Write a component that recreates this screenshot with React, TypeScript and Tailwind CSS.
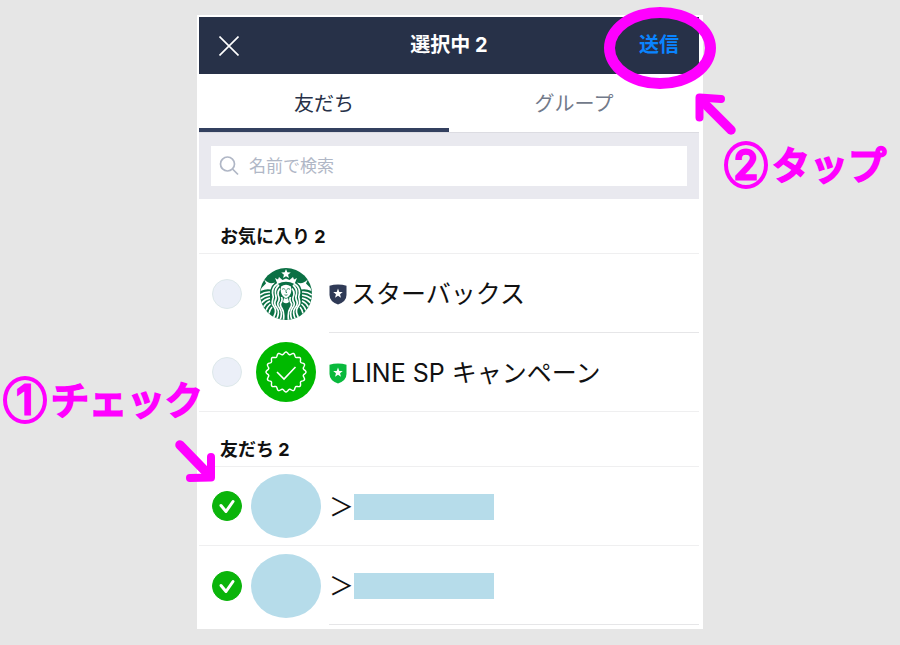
import { useState } from "react";
import clsx from "clsx";

const STAR =
	"M0 -10 L2.6 -3.4 L9.5 -3.1 L4.1 1.3 L5.9 8.1 L0 4.3 L-5.9 8.1 L-4.1 1.3 L-9.5 -3.1 L-2.6 -3.4 Z";

// wavy ring of the verified seal
const SEAL = `${Array.from({ length: 192 }, (_, i) => {
	const a = (i / 192) * Math.PI * 2;
	const r = 18.8 + 1.2 * Math.cos(a * 16);
	return `${i ? "L" : "M"}${(30 + r * Math.sin(a)).toFixed(2)} ${(30 - r * Math.cos(a)).toFixed(2)}`;
}).join("")}Z`;

function SirenHalf() {
	return (
		<g>
			{/* tail fluke */}
			<path
				d="M8 22 L12 31 L3 40 L1 46 Q12 41 21 43 Q22 36 30 29 Q22 32 17 29 Q11 26 8 22Z"
				fill="#fff"
			/>
			<g fill="none" stroke="#fff" strokeWidth="3.2">
				<path d="M0 54 Q9 47 20 48" />
				<path d="M1 62 Q9 55 20 54" />
				<path d="M3 70 Q10 62 20 60" />
				<path d="M7 78 Q12 69 20 66" />
				<path d="M12 85 Q15 77 21 72" />
				<path d="M18 91 Q19 84 24 78" />
			</g>
			{/* hair */}
			<g fill="none" stroke="#fff" strokeWidth="3.4">
				<path d="M36 31 Q24 38 25 50 Q28 58 25 65 Q23 72 29 79 Q34 86 27 99" />
				<path d="M38 34 Q29 42 31 52 Q34 60 30 67 Q28 73 34 80 Q40 88 33 103" />
				<path d="M40 41 Q34 48 37 56 Q40 63 36 69 Q34 74 39 80 Q46 89 40 104" />
				<path d="M43 58 Q46 65 41 71 Q40 76 44 81 Q49 88 47 104" />
			</g>
		</g>
	);
}

function SirenLogo() {
	return (
		<svg viewBox="0 0 104 104" className="size-[52px]" aria-hidden="true">
			<clipPath id="siren">
				<circle cx="52" cy="52" r="52" />
			</clipPath>
			<g clipPath="url(#siren)">
				<rect width="104" height="104" fill="#0b7044" />
				<SirenHalf />
				<g transform="matrix(-1 0 0 1 104 0)">
					<SirenHalf />
				</g>
				<path d={STAR} transform="translate(52 12)" fill="#fff" />
				<path
					d="M30 20 L36 23 L38 18 L45 24 L52 21 L59 24 L66 18 L68 23 L74 20 L69 32 Q52 23 35 32Z"
					fill="#fff"
				/>
				<path
					d="M42 37 Q52 30 62 37 Q64 49 59 55 Q55 60 52 60 Q49 60 45 55 Q40 49 42 37Z"
					fill="#fff"
				/>
				<path d="M48 60 Q52 63 56 60 L58 68 Q52 73 46 68Z" fill="#fff" />
				<g fill="none" stroke="#0b7044" strokeWidth="1.6">
					<path d="M44 42.500 Q47 40 50 42.500 M54 42.500 Q57 40 60 42.500" />
					<path d="M52 43 V49 H54" />
					<path d="M49 53.500 Q52 55.500 55 53.500" />
				</g>
			</g>
		</svg>
	);
}

function SealLogo() {
	return (
		<svg viewBox="0 0 60 60" className="size-[60px]" fill="none" aria-hidden="true">
			<circle cx="30" cy="30" r="30" fill="#00b900" />
			<path d={SEAL} stroke="#fff" strokeWidth="1.4" />
			<path d="M21 30 L28 37 L39.500 25" stroke="#fff" strokeWidth="1.6" />
		</svg>
	);
}

function Shield({ color }: { color: string }) {
	return (
		<svg viewBox="0 0 18 21" className="h-[21px] w-[18px] shrink-0" aria-hidden="true">
			<path
				d="M9 0.500 Q13.500 0.500 17.500 1.800 V11 Q17.500 17.500 9 20.500 Q0.500 17.500 0.500 11 V1.800 Q4.500 0.500 9 0.500Z"
				fill={color}
			/>
			<path d={STAR} transform="translate(9 9.600) scale(0.5)" fill="#fff" />
		</svg>
	);
}

function Blob() {
	return <span className="h-16 w-[70px] rounded-[50%] bg-[#b6dcea]" />;
}

function HiddenName() {
	return (
		<>
			<span>＞</span>
			<span className="h-[26px] w-[140px] bg-[#b6dcea]" />
		</>
	);
}

const favorites = [
	{
		id: "starbucks",
		avatar: <SirenLogo />,
		name: (
			<>
				<Shield color="#2f3a56" />
				<span className="pl-1">スターバックス</span>
			</>
		),
	},
	{
		id: "line-sp",
		avatar: <SealLogo />,
		name: (
			<>
				<Shield color="#09b93c" />
				<span className="pl-1">LINE SP キャンペーン</span>
			</>
		),
	},
];

const friends = [
	{ id: "friend-1", avatar: <Blob />, name: <HiddenName /> },
	{ id: "friend-2", avatar: <Blob />, name: <HiddenName /> },
];

type Row = (typeof favorites)[number];

function ContactRow({ row, line, checked, onToggle }: { row: Row; line: "full" | "inset"; checked: boolean; onToggle: () => void }) {
	return (
		<li className={clsx("h-[79px] border-[#efeff0]", line === "full" && "border-b")}>
			<label htmlFor={row.id} className="flex h-full items-stretch pl-[13px]">
				<span className="relative flex items-center">
					<input
						id={row.id}
						type="checkbox"
						checked={checked}
						onChange={onToggle}
						className="size-[30px] appearance-none rounded-full border border-[#dde8ea] bg-[#ebeff8] checked:border-[#0bb40b] checked:bg-[#0bb40b]"
					/>
					{checked && (
						<svg viewBox="0 0 30 30" className="pointer-events-none absolute size-[30px]" fill="none" aria-hidden="true">
							<path d="M9 14.500 L14 20.500 L21 10.500" stroke="#fff" strokeWidth="3" strokeLinecap="round" strokeLinejoin="round" />
						</svg>
					)}
				</span>
				<span className="flex w-[87px] items-center justify-center">{row.avatar}</span>
				<span
					className={clsx(
						"flex flex-1 items-center border-[#e6e6e8] pt-0.5 text-[25px] leading-8 text-[#111]",
						line === "inset" && "border-b",
					)}
				>
					{row.name}
				</span>
			</label>
		</li>
	);
}

function SectionTitle({ children }: { children: string }) {
	return (
		<h2 className="border-b border-[#efeff0] pt-[26px] pb-1 pl-[21px] text-[18px] leading-6 font-bold text-[#111]">
			{children}
		</h2>
	);
}

function Note({ num, text, className }: { num: string; text: string; className: string }) {
	return (
		<p
			className={clsx(
				"pointer-events-none absolute flex items-center text-[38px] leading-[48px] font-normal whitespace-nowrap text-[#f0f] [stroke-linejoin:round] [-webkit-text-stroke:3px_#f0f]",
				className,
			)}
		>
			<span className="flex h-12 w-11 items-center justify-center rounded-[50%] border-4 border-[#f0f] text-[40px] leading-10">
				{num}
			</span>
			<span className="pl-1">{text}</span>
		</p>
	);
}

export default function App() {
	const [tab, setTab] = useState("友だち");
	const [selected, setSelected] = useState(["friend-1", "friend-2"]);

	const toggle = (id: string) =>
		setSelected((prev) => (prev.includes(id) ? prev.filter((x) => x !== id) : [...prev, id]));

	return (
		<div className="min-h-screen overflow-hidden bg-[#e6e6e6] py-[15px] font-['Inter','Noto_Sans_CJK_JP',sans-serif]">
			<main className="relative mx-auto max-w-[506px] bg-white pt-0.5 pr-1 pb-1 pl-0.5">
				<header className="grid grid-cols-[1fr_auto_1fr] items-center bg-[#273148] px-5 py-3 text-[20px] leading-[33px] font-bold text-white">
					<button type="button" aria-label="閉じる" className="justify-self-start">
						<svg viewBox="0 0 20 20" className="size-5" stroke="#fff" strokeWidth="1.6" aria-hidden="true">
							<path d="M0.500 0.500 L19.500 19.500 M19.500 0.500 L0.500 19.500" />
						</svg>
					</button>
					<h1>選択中 {selected.length}</h1>
					<button type="button" className="justify-self-end text-[#0a84ff]">
						送信
					</button>
				</header>

				<nav className="grid grid-cols-2 border-b border-[#dcdce2]">
					{["友だち", "グループ"].map((label) => (
						<button
							type="button"
							key={label}
							onClick={() => setTab(label)}
							className={clsx(
								"border-b-4 pt-4 pb-[9px] text-[20px] leading-[29px]",
								tab === label ? "border-[#33405f] text-[#273148]" : "border-transparent text-[#727a8a]",
							)}
						>
							{label}
						</button>
					))}
				</nav>

				<div className="bg-[#e9e9ef] px-3 py-[13px]">
					<label className="flex h-10 items-center gap-2.5 bg-white px-2">
						<svg viewBox="0 0 20 20" className="size-5 shrink-0" fill="none" stroke="#b0b7c6" strokeWidth="1.7" aria-hidden="true">
							<circle cx="8.500" cy="8" r="7" />
							<path d="M13.500 13 L19 18.500" />
						</svg>
						<input
							type="text"
							aria-label="名前で検索"
							placeholder="名前で検索"
							className="w-full text-[17px] leading-6 outline-none placeholder:text-[#b0b7c6]"
						/>
					</label>
				</div>

				<SectionTitle>お気に入り 2</SectionTitle>
				<ul>
					{favorites.map((row, i) => (
						<ContactRow key={row.id} row={row} line={i === 0 ? "inset" : "full"} checked={selected.includes(row.id)} onToggle={() => toggle(row.id)} />
					))}
				</ul>

				<SectionTitle>友だち 2</SectionTitle>
				<ul>
					{friends.map((row, i) => (
						<ContactRow key={row.id} row={row} line={i === 0 ? "full" : "inset"} checked={selected.includes(row.id)} onToggle={() => toggle(row.id)} />
					))}
				</ul>

				{/* hand-drawn notes */}
				<span className="pointer-events-none absolute -top-2 -right-[13px] h-[82px] w-28 rounded-[50%] border-[11px] border-[#f0f]" />
				<svg viewBox="0 0 44 46" className="pointer-events-none absolute top-[76px] left-[496px] h-[46px] w-11" fill="none" stroke="#f0f" aria-hidden="true">
					<path d="M8 9 L38 39" strokeWidth="9.500" strokeLinecap="round" />
					<path d="M6.500 26.500 V6.500 L28 8" strokeWidth="8" strokeLinecap="round" strokeLinejoin="round" />
				</svg>
				<svg viewBox="0 0 44 46" className="pointer-events-none absolute top-[423px] -left-6 h-[46px] w-11" fill="none" stroke="#f0f" aria-hidden="true">
					<path d="M7 7 L37 38" strokeWidth="9.500" strokeLinecap="round" />
					<path d="M38 19 V39.500 L17 40" strokeWidth="8" strokeLinecap="round" strokeLinejoin="round" />
				</svg>
				<Note num="2" text="タップ" className="top-[126px] left-[527px]" />
				<Note num="1" text="チェック" className="top-[361px] right-[500px]" />
			</main>
		</div>
	);
}
